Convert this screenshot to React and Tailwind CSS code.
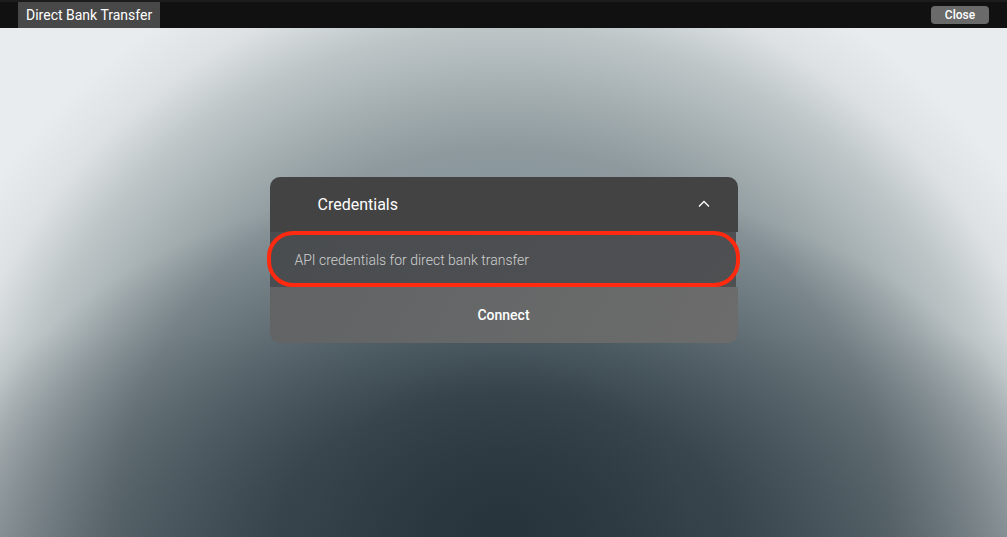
import React from "react";

export default function App() {
  return (
    <div className="w-[1007px] h-[537px] flex flex-col overflow-hidden font-['Roboto',sans-serif]">
      <div className="h-[28px] shrink-0 bg-[#111111] border-t-2 border-[#1c1c1c] flex items-stretch justify-between pl-[18px] pr-[18px]">
        <div className="bg-[#484848] px-[8px] flex items-center text-[14px] font-normal text-white">
          Direct Bank Transfer
        </div>
        <div className="flex items-center">
          <button className="h-[18px] w-[58px] rounded-[4px] bg-[#6a6a6a] text-white text-[12px] font-medium flex items-center justify-center">
            Close
          </button>
        </div>
      </div>
      <div className="flex-1 flex justify-center pt-[149px] bg-[linear-gradient(to_top,rgba(38,50,58,0.25)_0%,rgba(38,50,58,0)_40%),radial-gradient(ellipse_560px_360px_at_50%_100%,rgba(38,50,58,0.9)_0%,rgba(38,50,58,0.75)_40%,rgba(38,50,58,0.45)_65%,rgba(38,50,58,0.2)_85%,rgba(38,50,58,0)_100%),radial-gradient(circle_620px_at_50%_100%,#3a4850_0px,#7a8c94_187px,#8d999d_387px,#bdc5c7_509px,#dde1e4_565px,#e8ecef_620px)]">
        <div className="w-[468px] h-[166px] rounded-[10px] flex flex-col">
          <div className="h-[55px] bg-[#434343] rounded-t-[10px] flex items-center justify-between pl-[48px] pr-[28px]">
            <span className="text-[16px] text-white">Credentials</span>
            <svg width="12" height="8" viewBox="0 0 12 8" fill="none" className="mb-[2px]">
              <path d="M1 6.5L6 1.5L11 6.5" stroke="#ffffff" strokeWidth="1.3" />
            </svg>
          </div>
          <div className="relative h-[55px] bg-[linear-gradient(135deg,#4a4d50,#4e5052)] mr-[2px] flex items-center pl-[25px] pt-[2px]">
            <span className="text-[14px] font-light text-[#d0d0d0]">API credentials for direct bank transfer</span>
            <div className="absolute -left-[3px] -right-[4px] -top-[1px] bottom-0 border-4 border-[#ff2a0f] rounded-[26px]" />
          </div>
          <div className="h-[56px] bg-[linear-gradient(120deg,#616364,#6c6c6c)] rounded-b-[10px] flex items-center justify-center">
            <span className="text-[14px] font-medium text-white">Connect</span>
          </div>
        </div>
      </div>
    </div>
  );
}
